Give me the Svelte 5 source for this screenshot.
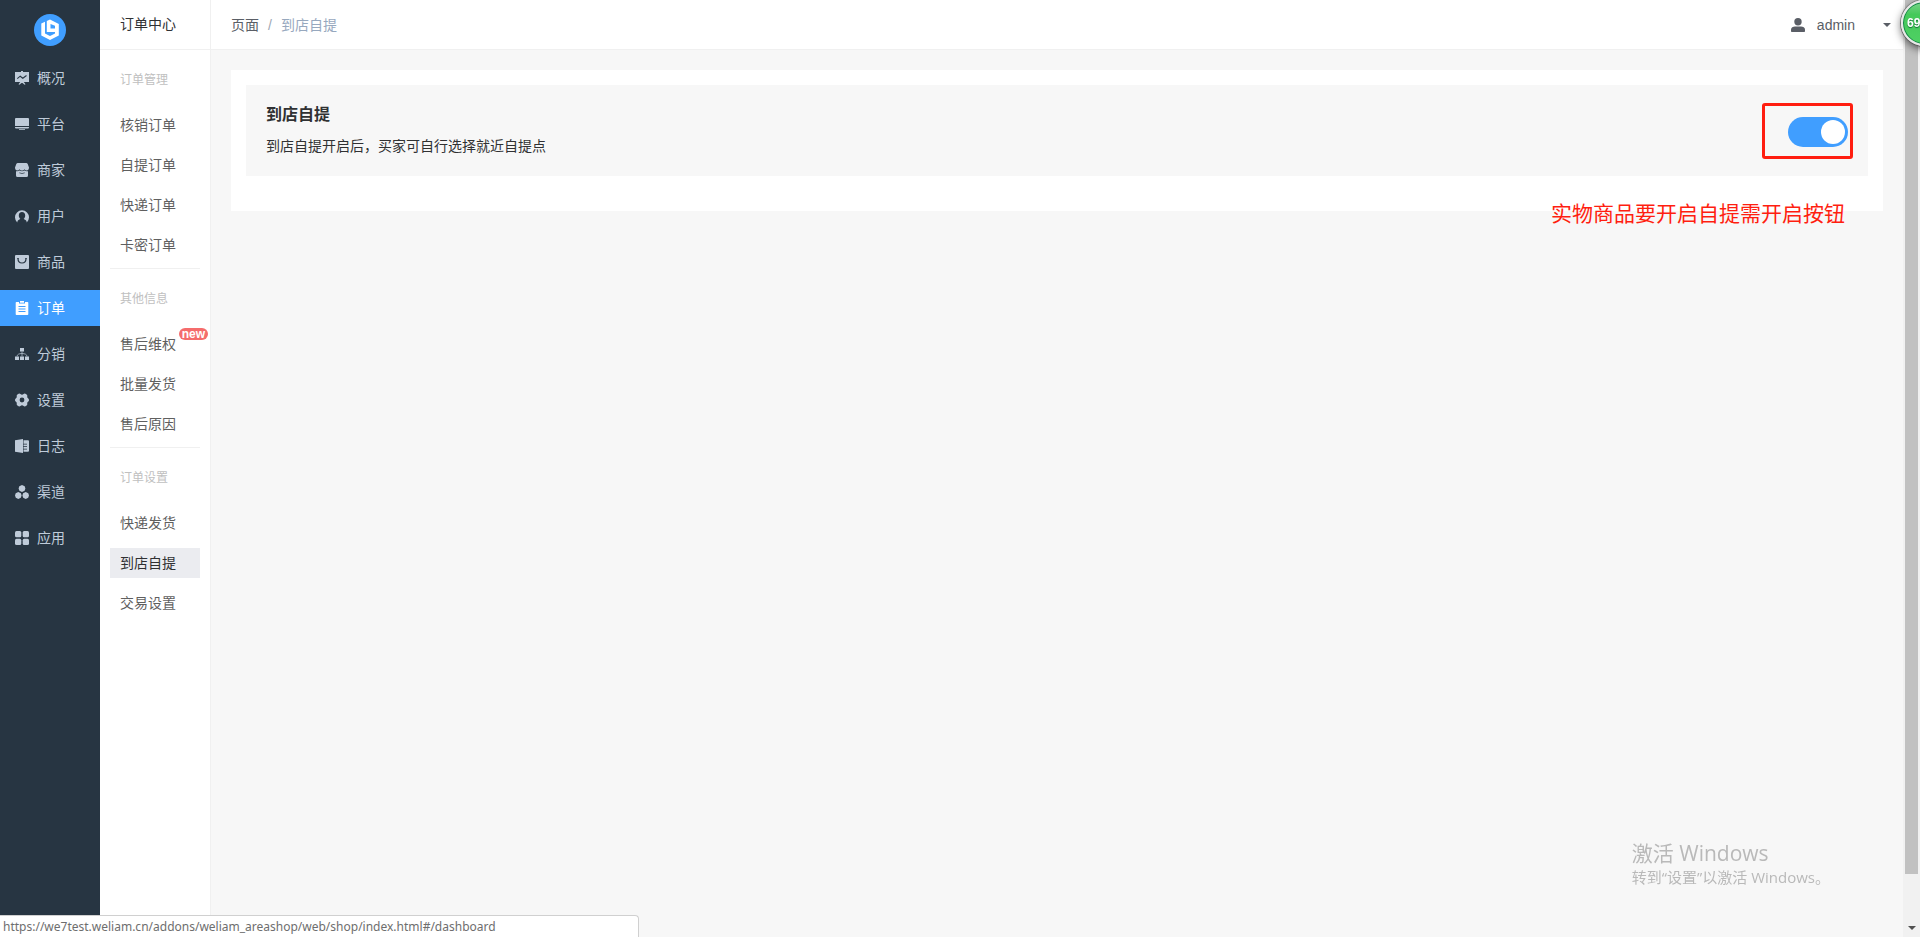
<script lang="ts">
  interface MenuItem {
    label: string;
    icon: string;
  }

  interface SubItem {
    label: string;
    badge?: string;
  }

  interface SubGroup {
    title: string;
    items: SubItem[];
  }

  const menu: MenuItem[] = [
    { label: '概况', icon: 'board' },
    { label: '平台', icon: 'screen' },
    { label: '商家', icon: 'shop' },
    { label: '用户', icon: 'user' },
    { label: '商品', icon: 'goods' },
    { label: '订单', icon: 'order' },
    { label: '分销', icon: 'tree' },
    { label: '设置', icon: 'gear' },
    { label: '日志', icon: 'log' },
    { label: '渠道', icon: 'channel' },
    { label: '应用', icon: 'apps' }
  ];

  const groups: SubGroup[] = [
    {
      title: '订单管理',
      items: [{ label: '核销订单' }, { label: '自提订单' }, { label: '快递订单' }, { label: '卡密订单' }]
    },
    {
      title: '其他信息',
      items: [{ label: '售后维权', badge: 'new' }, { label: '批量发货' }, { label: '售后原因' }]
    },
    {
      title: '订单设置',
      items: [{ label: '快递发货' }, { label: '到店自提' }, { label: '交易设置' }]
    }
  ];

  let activeMenu = $state('订单');
  let activeSub = $state('到店自提');
  let pickup = $state(true);
</script>

{#snippet icon(name: string)}
  <svg class="icon" viewBox="0 0 14 14" fill="currentColor" aria-hidden="true">
    {#if name === 'board'}
      <path d="M0 1h6V0h2v1h6v10H8.800l1.700 2.200-.9.600L7.500 12h-1l-2.100 1.800-.9-.6L5.200 11H0z" />
      <path d="M2.300 7.600 5.200 5.200l2.600 2L11.500 4.500" fill="none" stroke="#273542" stroke-width="1.100" />
    {:else if name === 'screen'}
      <path d="M1 1h12a1 1 0 0 1 1 1v7H0V2a1 1 0 0 1 1-1zM0 10h14v.5a1 1 0 0 1-1 1H1a1 1 0 0 1-1-1zM4 12.200h6v.8H4z" />
    {:else if name === 'shop'}
      <path d="M2.800 0h8.400q1 0 1.500 1L14 4.500c0 2-1 3-2.200 3-1 0-1.800-.4-2.300-1.200C9 7.100 8 7.500 7 7.500s-2-.4-2.500-1.200C4 7.100 3.200 7.500 2.200 7.500 1 7.500 0 6.500 0 4.500L1.300 1Q1.800 0 2.800 0z" />
      <path d="M1 8.200c1.300.3 2.500.1 3.500-.6 1.500 1 3.500 1 5 0 1 .7 2.200.9 3.500.6v4.300a1.500 1.500 0 0 1-1.500 1.500h-9A1.500 1.500 0 0 1 1 12.500z" />
      <path d="M4.300 9.800q2.700 1.600 5.400 0" fill="none" stroke="#273542" stroke-width=".7" />
    {:else if name === 'user'}
      <path fill-rule="evenodd" d="M2.200 13.400A7 7 0 1 1 11.800 13.400L11.400 12c-.4-1-2.400-1.300-2.700-2.200 1-.8 1.500-2 1.500-3.300C10.200 4.500 9 3 7 3S3.800 4.500 3.800 6.500c0 1.300.5 2.500 1.500 3.300C5 10.700 3 11 2.600 12z" />
    {:else if name === 'goods'}
      <path d="M1 0h12a1 1 0 0 1 1 1v12a1 1 0 0 1-1 1H1a1 1 0 0 1-1-1V1a1 1 0 0 1 1-1z" />
      <path d="M3 3.500C3 6.500 5 8 7 8s4-1.500 4-4.500M2.200 3.500h1.600M10.200 3.500h1.600" fill="none" stroke="#273542" stroke-width="1.200" />
    {:else if name === 'order'}
      <path fill-rule="evenodd" d="M1.500 1H4v1.500h6V1h2.500a.8.800 0 0 1 .8.800V13.200a.8.800 0 0 1-.8.800h-11a.8.800 0 0 1-.8-.8V1.800A.8.800 0 0 1 1.500 1zM3.500 5v1h7V5zM3.500 7.500v1h7v-1zM3.500 10v1h7v-1z" />
      <path d="M5 0h4v1.700H5z" />
    {:else if name === 'tree'}
      <path d="M5 1h4v3.500H5zM0 9.500h4V13H0zM5 9.500h4V13H5zM10 9.500h4V13h-4z" />
      <path d="M7 4.500v5M2 9.500C2 7.500 4 6.500 7 6.500s5 1 5 3" fill="none" stroke="currentColor" stroke-width=".7" />
    {:else if name === 'gear'}
      <path fill-rule="evenodd" d="M3.600.8Q4.600.2 5.400 1 7 2.300 8.600 1q.8-.8 1.800-.2l1.200.7q.9.600.7 1.700c-.3 1 .2 1.800 1 2.300q.7.500.7 1.500t-.7 1.500c-.8.500-1.300 1.300-1 2.300q.2 1.100-.7 1.700l-1.200.7q-1 .6-1.800-.2-1.600-1.300-3.200 0-.8.800-1.800.2l-1.200-.7q-.9-.6-.7-1.700c.3-1-.2-1.800-1-2.300Q0 8 0 7t.7-1.500c.8-.5 1.300-1.300 1-2.300q-.2-1.100.7-1.700zM7 4.600a2.400 2.400 0 1 0 0 4.800 2.400 2.400 0 0 0 0-4.800z" />
    {:else if name === 'log'}
      <path d="M0 1.300 8 0v14L0 12.700z" />
      <path d="M8.500 1.300H13a1 1 0 0 1 1 1v9.400a1 1 0 0 1-1 1H8.500v-2.200H12v-.8H8.500V8H12v-.8H8.500V5.500H12v-.8H8.500z" />
    {:else if name === 'channel'}
      <path d="m7 0 2.700 1.200.7 2.200-.8 2.400L7 7 4.400 5.800l-.8-2.400.7-2.200zM3.300 7l2.600 1.200.7 2.200-.8 2.400L3.300 14 .8 12.800 0 10.400l.7-2.200zM10.700 7l2.600 1.200.7 2.200-.8 2.400-2.500 1.200-2.500-1.200-.8-2.400.7-2.200z" />
    {:else if name === 'apps'}
      <rect width="6.300" height="6.300" rx="1.500" />
      <rect x="7.700" width="6.300" height="6.300" rx="1.500" />
      <rect y="7.700" width="6.300" height="6.300" rx="1.500" />
      <rect x="7.700" y="7.700" width="6.300" height="6.300" rx="1.500" />
    {/if}
  </svg>
{/snippet}

<div class="layout">
  <nav class="sidebar">
    <a class="logo" href="#/dashboard" aria-label="首页">
      <svg viewBox="0 0 32 32">
        <circle cx="16" cy="16" r="16" fill="#409eff" />
        <path d="M7.300 9.500 11 7.800v11.700l5 2.500v4l-8.700-4.500z" fill="#fff" />
        <path fill-rule="evenodd" d="M12.800 7 16 5.500l8.800 4.500v11.500L16 26v-4l5-2.500V18h-8.200zM16.500 10v4.500H21v-2.700z" fill="#fff" />
      </svg>
    </a>
    <ul class="menu">
      {#each menu as item}
        <li>
          <a
            class="menu-item"
            class:active={item.label === activeMenu}
            href="#/{item.icon}"
            onclick={() => (activeMenu = item.label)}
          >
            {@render icon(item.icon)}
            <span>{item.label}</span>
          </a>
        </li>
      {/each}
    </ul>
  </nav>

  <aside class="submenu">
    <h2 class="submenu-title">订单中心</h2>
    {#each groups as group}
      <section class="group">
        <h3 class="group-title">{group.title}</h3>
        <ul class="group-list">
          {#each group.items as item}
            <li>
              <a
                class="sub-item"
                class:active={item.label === activeSub}
                href="#/order"
                onclick={() => (activeSub = item.label)}
              >
                {item.label}
                {#if item.badge}<sup class="badge">{item.badge}</sup>{/if}
              </a>
            </li>
          {/each}
        </ul>
      </section>
    {/each}
  </aside>

  <div class="page">
    <header class="topbar">
      <nav class="breadcrumb">
        <a href="#/page">页面</a>
        <span class="separator">/</span>
        <span class="current">到店自提</span>
      </nav>
      <button class="account" type="button">
        <svg class="icon" viewBox="0 0 14 14" fill="currentColor" aria-hidden="true">
          <circle cx="7" cy="3.700" r="3.700" />
          <path d="M0 13.200V11.500C0 9.500 2 8.500 4 8.500h6c2 0 4 1 4 3v1.700q0 .8-.8.800H.8Q0 14 0 13.200z" />
        </svg>
        <span class="account-name">admin</span>
        <span class="caret"></span>
      </button>
    </header>

    <main class="content">
      <div class="card">
        <div class="setting">
          <div class="setting-text">
            <h1>到店自提</h1>
            <p id="pickup-desc">到店自提开启后，买家可自行选择就近自提点</p>
          </div>
          <div class="switch-wrap">
            <input
              class="switch"
              type="checkbox"
              role="switch"
              aria-label="到店自提"
              aria-describedby="pickup-desc"
              bind:checked={pickup}
            />
            <span class="highlight"></span>
            <span class="note">实物商品要开启自提需开启按钮</span>
          </div>
        </div>
      </div>
    </main>
  </div>

  <div class="scrollbar">
    <div class="thumb"></div>
    <span class="arrow-down"></span>
  </div>
</div>

<div class="watermark">
  <div class="watermark-title">激活 Windows</div>
  <div>转到“设置”以激活 Windows。</div>
</div>

<div class="ball">69</div>

<div class="status">https://we7test.weliam.cn/addons/weliam_areashop/web/shop/index.html#/dashboard</div>

<style>
  :global(body) {
    margin: 0;
    font-family: 'Liberation Sans', 'Noto Sans CJK SC', sans-serif;
    font-size: 14px;
    color: #303133;
    overflow: hidden;
  }

  h1, h2, h3, p, ul {
    margin: 0;
    padding: 0;
    font-weight: 400;
  }

  ul { list-style: none; }

  a {
    color: inherit;
    text-decoration: none;
  }

  .layout {
    display: flex;
    min-height: 100vh;
    background: #f7f7f7;
  }

  .icon {
    width: 14px;
    height: 14px;
    flex-shrink: 0;
  }

  .sidebar {
    width: 100px;
    flex-shrink: 0;
    background: #273542;
    color: #bfcbd9;
  }

  .logo {
    display: flex;
    align-items: center;
    justify-content: center;
    height: 60px;
  }

  .logo svg {
    width: 32px;
    height: 32px;
  }

  .menu {
    display: flex;
    flex-direction: column;
    gap: 10px;
  }

  .menu-item {
    display: flex;
    align-items: center;
    gap: 8px;
    height: 36px;
    padding-left: 15px;
    line-height: 36px;
  }

  .menu-item.active {
    background: #409eff;
    color: #fff;
  }

  .submenu {
    width: 110px;
    flex-shrink: 0;
    background: #fff;
    border-right: 1px solid #f0f0f0;
  }

  .submenu-title {
    height: 49px;
    padding-left: 20px;
    border-bottom: 1px solid #f0f0f0;
    font-size: 14px;
    line-height: 49px;
  }

  .group {
    margin: 0 10px;
    padding-bottom: 8px;
    border-bottom: 1px solid #f0f0f0;
  }

  .group:last-child { border-bottom: none; }

  .group-title {
    padding-left: 10px;
    font-size: 12px;
    line-height: 60px;
    color: #c0c0c0;
  }

  .group-list {
    display: flex;
    flex-direction: column;
    gap: 10px;
  }

  .sub-item {
    display: block;
    position: relative;
    padding-left: 10px;
    line-height: 30px;
    color: #5f5f5f;
  }

  .sub-item.active {
    background: #ebecf0;
    color: #303133;
  }

  .badge {
    position: absolute;
    top: -1px;
    right: -8px;
    padding: 0 3px;
    border-radius: 6px;
    background: #f56c6c;
    color: #fff;
    font-size: 12px;
    font-weight: 700;
    line-height: 12px;
  }

  .page {
    flex: 1;
    min-width: 0;
  }

  .topbar {
    display: flex;
    align-items: center;
    justify-content: space-between;
    height: 49px;
    padding: 0 12px 0 20px;
    background: #fff;
    border-bottom: 1px solid #f0f0f0;
  }

  .breadcrumb {
    display: flex;
    align-items: baseline;
    gap: 9px;
    line-height: 48px;
    color: #5a5e66;
  }

  .separator { color: #a0a8b4; }

  .current { color: #97a8be; }

  .account {
    display: flex;
    align-items: center;
    padding: 0;
    border: none;
    background: none;
    font: inherit;
    color: #5a5e66;
  }

  .account-name { margin: 0 28px 0 12px; }

  .caret {
    border: 4px solid transparent;
    border-top-color: #5a5e66;
    border-bottom: none;
  }

  .content { padding: 20px; }

  .card {
    padding: 15px 15px 35px;
    background: #fff;
  }

  .setting {
    display: flex;
    align-items: center;
    justify-content: space-between;
    padding: 15px 20px 13px;
    background: #f7f7f7;
  }

  .setting-text h1 {
    font-size: 16px;
    font-weight: 700;
    line-height: 30px;
  }

  .setting-text p { line-height: 33px; }

  .switch-wrap {
    display: flex;
    position: relative;
  }

  .switch {
    appearance: none;
    width: 60px;
    height: 30px;
    margin: 0;
    padding: 3px;
    border-radius: 15px;
    background: #dcdfe6;
    cursor: pointer;
  }

  .switch::before {
    content: '';
    display: block;
    width: 24px;
    height: 24px;
    border-radius: 50%;
    background: #fff;
  }

  .switch:checked { background: #409eff; }

  .switch:checked::before { margin-left: auto; }

  .highlight {
    position: absolute;
    top: -14px;
    right: -5px;
    width: 85px;
    height: 50px;
    border: 3px solid #ff1e10;
    border-radius: 3px;
    pointer-events: none;
  }

  .note {
    position: absolute;
    top: 82px;
    right: 3px;
    font-size: 21px;
    line-height: 30px;
    color: #ff1e10;
    white-space: nowrap;
  }

  .scrollbar {
    display: flex;
    flex-direction: column;
    align-items: center;
    justify-content: space-between;
    width: 17px;
    flex-shrink: 0;
    background: #f1f1f1;
  }

  .thumb {
    width: 13px;
    height: 874px;
    max-height: 94vh;
    background: #c1c1c1;
  }

  .arrow-down {
    margin-bottom: 7px;
    border: 4px solid transparent;
    border-top-color: #505050;
    border-bottom: none;
  }

  .watermark {
    position: fixed;
    right: 90px;
    bottom: 49px;
    font-family: 'Open Sans', 'Noto Sans CJK SC', sans-serif;
    font-size: 15px;
    line-height: 22px;
    color: #b9b9b9;
  }

  .watermark-title {
    font-size: 21px;
    line-height: 26px;
  }

  .ball {
    position: fixed;
    top: 0;
    right: -27px;
    box-sizing: border-box;
    width: 46px;
    height: 46px;
    padding-left: 4px;
    border: 2px solid #e8e8e8;
    border-radius: 50%;
    background: linear-gradient(#7ad38a, #45c95a 30%, #4fd164);
    box-shadow: 0 3px 8px #0009, 0 0 0 1px #999, inset 0 0 0 1px #16824a;
    color: #fff;
    font-size: 12px;
    font-weight: 700;
    line-height: 42px;
    text-shadow: 0 1px 1px #0a6a30;
  }

  .status {
    position: fixed;
    left: 0;
    bottom: 0;
    width: 635px;
    padding-left: 3px;
    border: 1px solid #d0d0d0;
    border-width: 1px 1px 0 0;
    border-radius: 0 4px 0 0;
    background: #fff;
    font-family: 'Noto Sans', sans-serif;
    font-size: 12px;
    line-height: 21px;
    color: #6e6e6e;
  }
</style>
